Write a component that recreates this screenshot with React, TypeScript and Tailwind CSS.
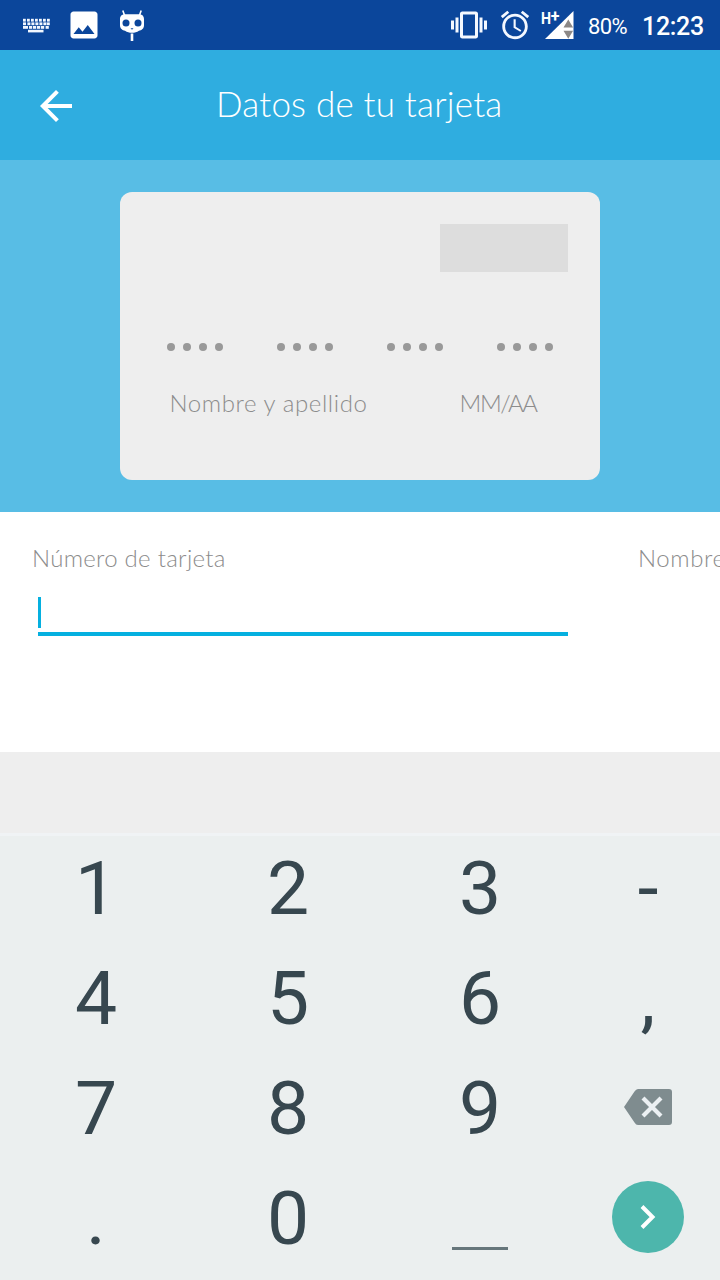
import type { ReactNode } from 'react';

function KeyboardIcon() {
  const rows = [
    { y: 18.8, xs: [23, 27, 31, 35, 39, 43, 47], w: 2.8 },
    { y: 22.4, xs: [23, 27.4, 31.4, 35.4, 39.4, 43.4, 46.8], w: 3 },
    { y: 26, xs: [29, 33, 37, 41, 45.6], w: 3.2 },
  ];
  return (
    <svg className="h-[50px] w-[28px]" viewBox="22 0 28 50" fill="#f2f7ff">
      {rows.map((r) => r.xs.map((x) => <rect key={`${r.y}-${x}`} x={x} y={r.y} width={r.w} height="2.8" />))}
      <rect x="23" y="26" width="5" height="2.8" />
      <rect x="28" y="29.8" width="15.5" height="2.6" />
    </svg>
  );
}

function CidIcon() {
  return (
    <svg className="h-[50px] w-[26px]" viewBox="119 0 26 50">
      <path d="M122.800 10.500L124.600 15.500M141.200 10.500L139.400 15.500" stroke="#fff" strokeWidth="1.600" />
      <g fill="#fff">
        <path d="M125 14.300h14c3.600 0 5 2.200 5 5v6c0 3.500-2.500 5-5 5.400-2.200 1.600-4.200 2-7 2s-4.800-.4-7-2c-2.500-.4-5-1.900-5-5.400v-6c0-2.800 1.400-5 5-5z" />
        <rect x="130.700" y="33.500" width="2.600" height="7.500" />
      </g>
      <circle cx="126" cy="23" r="3.500" fill="#0b469b" />
      <circle cx="138" cy="23" r="3.500" fill="#0b469b" />
      <path d="M130.500 28.300h3l-1.500 1.500z" fill="#0b469b" />
    </svg>
  );
}

function StatusBar() {
  return (
    <header className="flex h-[50px] items-center bg-[#0b469b] pl-[22px] pr-4 text-white">
      <KeyboardIcon />
      <svg className="ml-4 size-9" viewBox="0 0 24 24" fill="#fff">
        <path d="M21 19V5c0-1.100-.9-2-2-2H5c-1.100 0-2 .9-2 2v14c0 1.100.9 2 2 2h14c1.100 0 2-.9 2-2zM8.500 13.500l2.500 3.010L14.500 12l4.500 6H5l3.500-4.500z" />
      </svg>
      <div className="ml-[17px]"><CidIcon /></div>
      <div className="ml-auto flex items-center">
        <svg className="size-9" viewBox="0 0 24 24" fill="#f4f8ff">
          <path d="M0 15h2V9H0v6zm3 2h2V7H3v10zm19-8v6h2V9h-2zm-3 8h2V7h-2v10zM16.500 3h-9C6.670 3 6 3.670 6 4.500v15c0 .83.67 1.500 1.500 1.500h9c.83 0 1.500-.67 1.500-1.500v-15c0-.83-.67-1.500-1.500-1.500zM16 19H8V5h8v14z" />
        </svg>
        <svg className="ml-[11px] size-[34px]" viewBox="0 0 24 24" fill="#f4f8ff">
          <path d="M22 5.720l-4.600-3.860-1.290 1.530 4.600 3.860L22 5.720zM7.880 3.390L6.600 1.860 2 5.710l1.290 1.530 4.590-3.850zM12.500 8H11v6l4.750 2.850.75-1.230-4-2.370V8zM12 4c-4.970 0-9 4.030-9 9s4.020 9 9 9c4.970 0 9-4.030 9-9s-4.030-9-9-9zm0 16c-3.870 0-7-3.130-7-7s3.130-7 7-7 7 3.130 7 7-3.130 7-7 7z" />
        </svg>
        <svg className="ml-[9px] h-[50px] w-[34px]" viewBox="541 0 34 50">
          <path d="M545 39L573.500 11V39Z" fill="#fff" />
          <path d="M563.500 27.500l4.800-8 4.800 8zM563.500 30.800h9.600l-4.800 8z" fill="#8c8886" />
          <text x="541" y="23.500" fill="#fff" className="text-[16px] font-bold" textLength="10" lengthAdjust="spacingAndGlyphs">H</text>
          <text x="550.800" y="21.500" fill="#fff" className="text-[16px] font-bold">+</text>
        </svg>
        <span className="ml-[13px] mt-[3px] w-[54px] text-[22px] leading-[50px] tracking-[-0.6px]">80%</span>
        <span className="mt-1 w-[62px] whitespace-nowrap text-[25px] font-medium leading-[50px] tracking-[-0.3px]">12:23</span>
      </div>
    </header>
  );
}

function CardPreview() {
  return (
    <section className="flex h-[352px] justify-center bg-[#58bde5] pt-8">
      <div className="flex h-[288px] w-[480px] flex-col rounded-xl bg-[#eee] pt-8 text-[#8c8c8c]">
        <div className="mr-8 h-12 w-32 self-end bg-[#ddd]" />
        <div className="mt-[71px] flex gap-[54px] pl-[46.500px]">
          {[0, 1, 2, 3].map((group) => (
            <div key={group} className="flex gap-2">
              {[0, 1, 2, 3].map((dot) => <i key={dot} className="size-2 rounded-full bg-[#999]" />)}
            </div>
          ))}
        </div>
        <div className="mt-[36px] flex font-['Lato',sans-serif] text-2xl font-light leading-[32px]">
          <span className="ml-[49.500px] w-[290px] tracking-[0.6px]">Nombre y apellido</span>
          <span className="tracking-[-1.400px]">MM/AA</span>
        </div>
      </div>
    </section>
  );
}

function CardForm() {
  return (
    <section className="flex h-[240px] overflow-hidden bg-white pt-[30px] font-['Lato',sans-serif] text-2xl font-light leading-[32px] text-[#8c8c8c]">
      <div className="ml-8 w-[606px] shrink-0">
        <label className="block tracking-[0.280px]">Número de tarjeta</label>
        <div className="ml-1.5 mt-[23px] h-[39px] w-[530px] border-b-4 border-[#05b0e0]">
          <div className="h-[31px] w-[3px] bg-[#05b0e0]" />
        </div>
      </div>
      <label className="shrink-0 whitespace-nowrap tracking-[0.6px]">Nombre y apellido</label>
    </section>
  );
}

function BackspaceIcon() {
  return (
    <svg className="-mt-0.5 h-9 w-12" viewBox="0 0 48 36">
      <path d="M14 0H45q3 0 3 3V33q0 3-3 3H14q-2 0-3.500-2.500L0 18 10.500 2.500Q12 0 14 0Z" fill="#7f8c8f" />
      <path d="M19 9l18 18M37 9l-18 18" stroke="#ecf0f3" strokeWidth="4.200" />
    </svg>
  );
}

function Keypad() {
  const keys: ReactNode[] = [
    '1', '2', '3', '-',
    '4', '5', '6', ',',
    '7', '8', '9', <BackspaceIcon />,
    '.', '0',
    <span className="mt-[61px] h-[3px] w-14 bg-[#66767b]" />,
    <span className="-mt-0.5 flex size-[72px] items-center justify-center rounded-full bg-[#4db6ac]">
      <svg className="size-12" viewBox="0 0 48 48" fill="none" stroke="#fff" strokeWidth="4">
        <path d="M18 13.500L28.500 24 18 34.500" />
      </svg>
    </span>,
  ];
  return (
    <section className="h-[447px] border-t-[3px] border-[#f0f3f5] bg-[#ebefef]">
      <div className="-mt-[3px] grid auto-rows-[110px] grid-cols-[192px_192px_192px_144px]">
        {keys.map((key, i) => (
          <div key={i} className="flex items-center justify-center text-[75px] leading-[110px] text-[#37474f]">{key}</div>
        ))}
      </div>
    </section>
  );
}

export default function App() {
  return (
    <main className="h-[1280px] w-[720px] overflow-hidden bg-[#eee] font-['Roboto',sans-serif]">
      <StatusBar />
      <nav className="flex h-[110px] items-center bg-[#2fade0] pl-8 text-white">
        <svg className="mt-0.5 size-12" viewBox="0 0 24 24" fill="#fff">
          <path d="M20 11H7.830l5.590-5.590L12 4l-8 8 8 8 1.410-1.410L7.830 13H20v-2z" />
        </svg>
        <h1 className="-mt-[3px] ml-[136px] whitespace-nowrap font-['Lato',sans-serif] text-[35px] font-light tracking-[0.200px]">Datos de tu tarjeta</h1>
      </nav>
      <CardPreview />
      <CardForm />
      <div className="h-[81px] bg-[#eee]" />
      <Keypad />
    </main>
  );
}
